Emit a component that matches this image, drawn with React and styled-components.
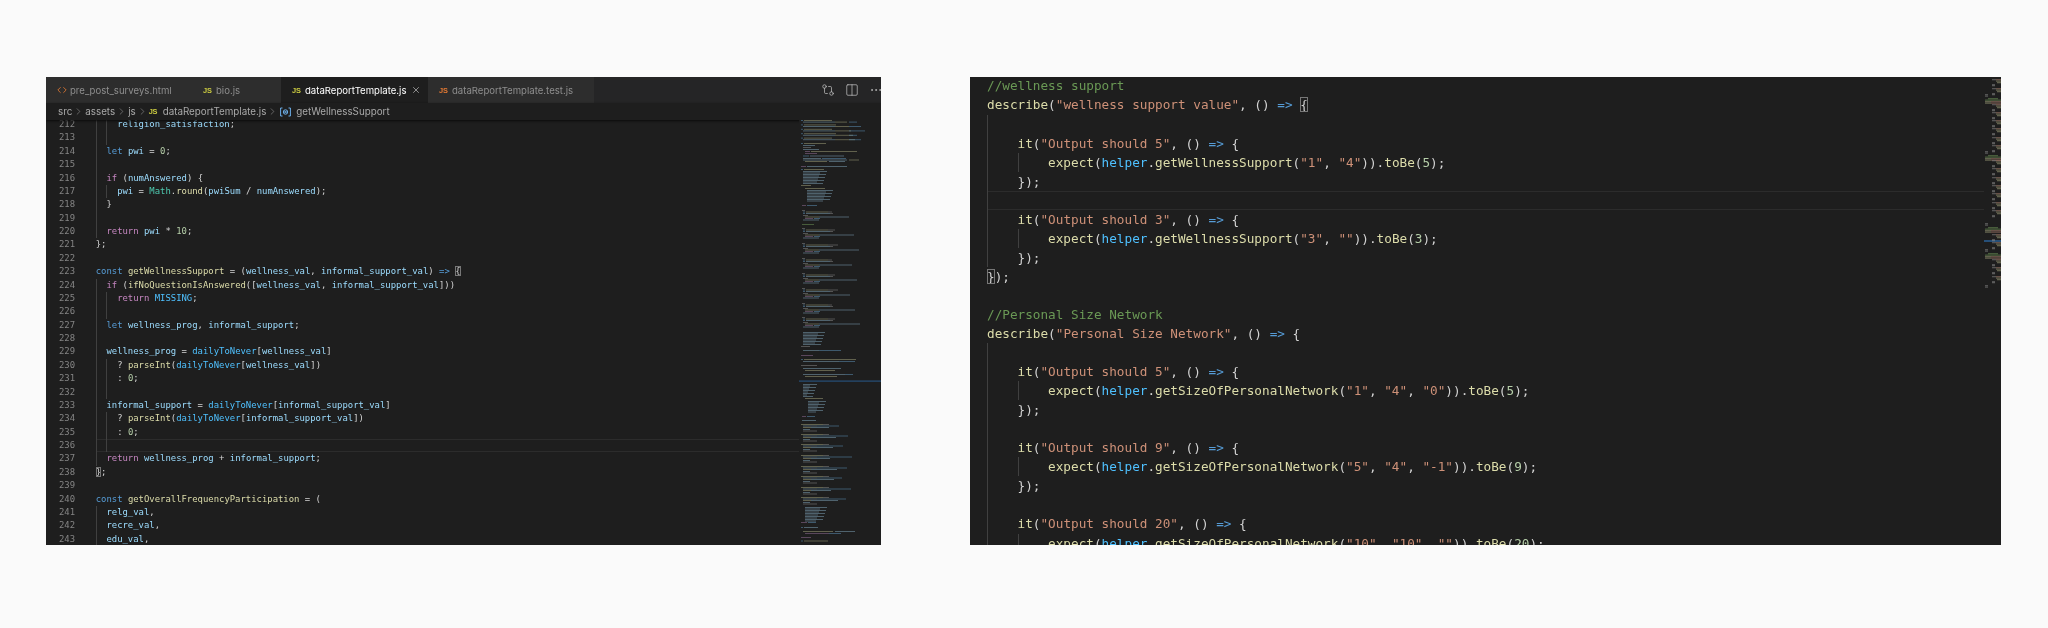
import React from 'react'
import styled, { createGlobalStyle } from 'styled-components'
import { ChevronRight, Code, Columns2, Ellipsis, GitCompare, X } from 'lucide-react'

const GlobalStyle = createGlobalStyle`
  html, body {
    margin: 0;
    background: #fafafa;
  }
`

const colors = {
  keyword: '#569cd6',
  flow: '#c586c0',
  func: '#dcdcaa',
  variable: '#9cdcfe',
  constant: '#4fc1ff',
  type: '#4ec9b0',
  number: '#b5cea8',
  string: '#ce9178',
  comment: '#6a9955',
  plain: '#d4d4d4'
}

const Page = styled.div`
  display: flex;
  align-items: flex-start;
  gap: 89px;
  height: 628px;
  box-sizing: border-box;
  padding: 77px 0 0 46px;
  overflow: hidden;
`

const Shot = styled.div`
  display: flex;
  flex-direction: column;
  width: ${props => props.$width}px;
  height: 468px;
  overflow: hidden;
  background: #1e1e1e;
  filter: blur(0.4px);
`

const TabBar = styled.div`
  display: flex;
  flex: none;
  height: 26px;
  background: #252526;
`

const Tab = styled.div`
  display: flex;
  align-items: center;
  width: ${props => props.$width}px;
  box-sizing: border-box;
  padding-left: 11px;
  background: ${props => (props.$active ? '#1e1e1e' : '#2d2d2d')};
  color: ${props => (props.$active ? '#ffffff' : '#8e8e8e')};
  font: 400 9.6px Inter, "Liberation Sans", sans-serif;
`

const TabLabel = styled.span`
  margin-left: ${props => props.$gap || 5}px;
  white-space: nowrap;
`

const JsBadge = styled.span`
  flex: none;
  width: 9px;
  color: ${props => props.$color || '#cbcb41'};
  font: 700 7.4px "Liberation Sans", sans-serif;
  letter-spacing: -0.2px;
`

const CloseIcon = styled(X)`
  flex: none;
  margin-left: 5px;
`

const TabActions = styled.div`
  display: flex;
  align-items: center;
  gap: 10px;
  margin-left: auto;
  margin-right: -2px;
  color: #c5c5c5;
`

const Breadcrumb = styled.div`
  position: relative;
  z-index: 2;
  display: flex;
  flex: none;
  align-items: center;
  height: 17px;
  padding-left: 12px;
  background: #1e1e1e;
  box-shadow: 0 1px 2px #0b0b0b;
  color: #a9a9a9;
  font: 400 9.8px Inter, "Liberation Sans", sans-serif;
`

const Crumb = styled.span`
  margin-left: ${props => props.$gap || 0}px;
  white-space: nowrap;
`

const CrumbArrow = styled(ChevronRight)`
  flex: none;
  margin: 0 1px;
  color: #9a9a9a;
`

const SymbolIcon = styled.svg`
  flex: none;
  margin-left: 1px;
`

const Editor = styled.div`
  display: flex;
  flex: 1;
  min-height: 0;
`

const CodePane = styled.div`
  flex: 1;
  min-width: 0;
  overflow: hidden;
  padding-left: ${props => props.$padLeft || 0}px;
  font-family: "DejaVu Sans Mono", "Liberation Mono", monospace;
  font-size: ${props => props.$size}px;
  line-height: ${props => props.$lineHeight}px;
`

const CodeScroll = styled.div`
  margin-top: ${props => props.$offset}px;
`

const Row = styled.div`
  display: flex;
  height: ${props => props.$height}px;
`

const LineNumber = styled.span`
  flex: none;
  width: 29px;
  margin-right: 20.7px;
  color: #858585;
  text-align: right;
`

const CodeLine = styled.div`
  display: flex;
  flex: 1;
  min-width: 0;
  box-sizing: border-box;
  white-space: pre;
  color: ${colors.plain};
  box-shadow: ${props => (props.$current ? 'inset 0 1px 0 #2c2c2c, inset 0 -1px 0 #2c2c2c' : 'none')};
`

const Guide = styled.span`
  flex: none;
  box-sizing: border-box;
  width: ${props => props.$tab}ch;
  border-left: 1px solid #404040;
`

const Token = styled.span`
  color: ${props => colors[props.$kind]};
`

const Bracket = styled.span`
  outline: 1px solid #777;
  outline-offset: -1px;
`

const Minimap = styled.svg`
  position: relative;
  z-index: 3;
  display: block;
  flex: none;
  background: #1e1e1e;
`

const flowWords = ['return', 'if']
const keywords = ['const', 'let']
const constants = ['MISSING', 'dailyToNever', 'helper']
const funcNames = ['getWellnessSupport', 'getOverallFrequencyParticipation']

// small highlighter, just enough for the lines in these two screenshots
const highlight = text => {
  const parts = text.match(/\/\/.*|"[^"]*"|=>|§.|[A-Za-z_]\w*|\d+|\s+|./g) || []
  return parts.map((part, i) => {
    const next = parts[i + 1]
    if (part.startsWith('//')) return <Token key={i} $kind="comment">{part}</Token>
    if (part.startsWith('"')) return <Token key={i} $kind="string">{part}</Token>
    if (part.startsWith('§')) return <Bracket key={i}>{part[1]}</Bracket>
    if (part === '=>') return <Token key={i} $kind="keyword">{part}</Token>
    if (/^\d+$/.test(part)) return <Token key={i} $kind="number">{part}</Token>
    if (/^[A-Za-z_]/.test(part)) {
      let kind = 'variable'
      if (flowWords.includes(part)) kind = 'flow'
      else if (keywords.includes(part)) kind = 'keyword'
      else if (constants.includes(part)) kind = 'constant'
      else if (part === 'Math') kind = 'type'
      else if (next === '(' || funcNames.includes(part)) kind = 'func'
      return <Token key={i} $kind={kind}>{part}</Token>
    }
    return <span key={i}>{part}</span>
  })
}

const leftCode = [
  [212, 2, '    religion_satisfaction;'],
  [213, 2, ''],
  [214, 1, '  let pwi = 0;'],
  [215, 1, ''],
  [216, 1, '  if (numAnswered) {'],
  [217, 2, '    pwi = Math.round(pwiSum / numAnswered);'],
  [218, 1, '  }'],
  [219, 1, ''],
  [220, 1, '  return pwi * 10;'],
  [221, 0, '};'],
  [222, 0, ''],
  [223, 0, 'const getWellnessSupport = (wellness_val, informal_support_val) => §{'],
  [224, 1, '  if (ifNoQuestionIsAnswered([wellness_val, informal_support_val]))'],
  [225, 2, '    return MISSING;'],
  [226, 2, ''],
  [227, 1, '  let wellness_prog, informal_support;'],
  [228, 1, ''],
  [229, 1, '  wellness_prog = dailyToNever[wellness_val]'],
  [230, 2, '    ? parseInt(dailyToNever[wellness_val])'],
  [231, 2, '    : 0;'],
  [232, 2, ''],
  [233, 1, '  informal_support = dailyToNever[informal_support_val]'],
  [234, 2, '    ? parseInt(dailyToNever[informal_support_val])'],
  [235, 2, '    : 0;'],
  [236, 2, '', true],
  [237, 1, '  return wellness_prog + informal_support;'],
  [238, 0, '§};'],
  [239, 0, ''],
  [240, 0, 'const getOverallFrequencyParticipation = ('],
  [241, 1, '  relg_val,'],
  [242, 1, '  recre_val,'],
  [243, 1, '  edu_val,']
]

const rightCode = [
  [0, '//wellness support'],
  [0, 'describe("wellness support value", () => §{'],
  [1, ''],
  [1, '    it("Output should 5", () => {'],
  [2, '        expect(helper.getWellnessSupport("1", "4")).toBe(5);'],
  [1, '    });'],
  [1, '', true],
  [1, '    it("Output should 3", () => {'],
  [2, '        expect(helper.getWellnessSupport("3", "")).toBe(3);'],
  [1, '    });'],
  [0, '§});'],
  [0, ''],
  [0, '//Personal Size Network'],
  [0, 'describe("Personal Size Network", () => {'],
  [1, ''],
  [1, '    it("Output should 5", () => {'],
  [2, '        expect(helper.getSizeOfPersonalNetwork("1", "4", "0")).toBe(5);'],
  [1, '    });'],
  [1, ''],
  [1, '    it("Output should 9", () => {'],
  [2, '        expect(helper.getSizeOfPersonalNetwork("5", "4", "-1")).toBe(9);'],
  [1, '    });'],
  [1, ''],
  [1, '    it("Output should 20", () => {'],
  [2, '        expect(helper.getSizeOfPersonalNetwork("10", "10", "")).toBe(20);']
]

const Line = ({ guides, tab, text, current }) => (
  <CodeLine $current={current}>
    {Array.from({ length: guides }, (_, i) => <Guide key={i} $tab={tab} />)}
    <span>{highlight(text.slice(guides * tab))}</span>
  </CodeLine>
)

const BLUE = '#5d93bb'
const YEL = '#a3a37c'
const VAR = '#7fa6bb'
const GRAY = '#8a8a8a'
const PUR = '#96709a'
const GRN = '#6f9a58'
const BRN = '#ad8270'

// left minimap, rows placed by y inside the drawing
const buildLeftMinimap = () => {
  const out = []
  const put = (y, ...segs) => segs.forEach(([x, w, c]) => out.push([y, x, w, c]))
  const dense = (y, n, x, w, c) => {
    for (let i = 0; i < n; i++) put(y + i * 1.5, [x, w - ((i * 7) % 13), c])
  }
  ;[0, 4.4, 8.8, 13.2, 17.6].forEach((y, i) => {
    put(y, [2, 2, BLUE], [5, 28 + (i % 2) * 4, YEL])
    put(y + 1.6, [4, 32, VAR], [36, 12 + i * 2, YEL], [50, 8 + (i % 3) * 4, BLUE])
  })
  put(23, [2, 2, BLUE], [5, 22, YEL])
  put(25, [4, 12, VAR])
  put(27, [4, 8, GRAY])
  put(29, [4, 16, VAR])
  put(31, [6, 5, PUR], [12, 46, YEL])
  put(33, [6, 12, PUR])
  put(35.5, [4, 6, BLUE], [11, 34, VAR])
  put(38, [4, 18, VAR], [23, 24, BLUE])
  put(39.5, [4, 44, VAR], [50, 10, YEL])
  put(41, [6, 22, YEL], [30, 16, VAR])
  put(46, [2, 5, PUR], [8, 40, VAR])
  put(49, [2, 2, BLUE], [5, 20, YEL])
  dense(51, 9, 4, 24, VAR)
  put(65, [2, 10, YEL])
  dense(68, 1, 6, 20, YEL)
  dense(70, 8, 8, 26, VAR)
  put(85, [3, 4, PUR], [8, 10, BLUE])
  ;[90, 108, 123, 138, 153, 168, 183, 197].forEach((y, i) => {
    const long = 30 + ((i * 5) % 12)
    put(y, [3, 3, GRAY])
    put(y + 1.5, [4, 2, BLUE], [7, 22, YEL], [29, 4 + (i % 3) * 3, GRAY])
    put(y + 3, [4, 2, BLUE], [7, 24, VAR], [31, 3, GRAY])
    put(y + 5, [4, 5, GRAY])
    put(y + 6.5, [6, 14, YEL], [20, long, VAR])
    put(y + 8, [6, 8, PUR], [15, 6, BLUE])
    put(y + 9.5, [4, 16, VAR])
  })
  put(104, [3, 12, GRN])
  dense(212, 9, 4, 22, VAR)
  put(226, [2, 9, GRAY])
  put(230, [4, 16, VAR], [20, 22, BLUE])
  put(235, [2, 12, PUR])
  put(239, [2, 2, BLUE], [5, 52, YEL])
  put(241, [4, 36, VAR], [40, 16, BLUE])
  put(245, [2, 16, GRAY])
  put(248, [4, 38, VAR])
  put(250, [6, 30, YEL])
  put(254, [4, 42, VAR], [46, 8, BLUE])
  put(256, [6, 32, YEL])
  dense(264, 9, 4, 14, VAR)
  put(278, [6, 18, YEL])
  dense(281, 8, 9, 18, VAR)
  put(296, [3, 4, PUR], [8, 8, BLUE])
  put(300, [3, 14, VAR])
  ;[304, 314, 324, 335, 346, 356, 367, 377].forEach((y, i) => {
    put(y, [2, 22, YEL], [24, 6, GRAY])
    put(y + 1.5, [4, 14, VAR], [18, 22 + ((i * 9) % 14), BLUE])
    put(y + 3, [4, 8, YEL], [12, 18 + ((i * 7) % 10), VAR])
    put(y + 5, [4, 7, VAR])
    put(y + 6.5, [4, 14, GRAY])
  })
  dense(387, 10, 6, 22, VAR)
  put(402, [2, 6, PUR], [9, 8, BLUE])
  put(407, [2, 2, BLUE], [5, 14, VAR])
  put(411, [4, 30, YEL], [36, 20, VAR])
  put(413, [6, 24, PUR], [30, 12, BLUE])
  put(417, [2, 10, PUR])
  put(420.5, [2, 2, BLUE], [5, 24, YEL])
  return out
}

const buildRightMinimap = () => {
  const out = []
  const put = (y, ...segs) => segs.forEach(([x, w, c]) => out.push([y, x, w, c]))
  const test = y => {
    put(y, [8, 4, GRAY], [12, 6, BRN])
    put(y + 1.5, [12, 6, YEL])
    put(y + 3, [13, 5, YEL])
    put(y + 5, [8, 3, GRAY])
    put(y + 6, [8, 3, GRAY])
  }
  const head = y => {
    put(y, [4, 10, GRN])
    put(y + 1.5, [1, 6, GRN], [7, 11, GRN])
    put(y + 3, [1, 6, YEL], [7, 11, BRN])
    put(y + 4.5, [1, 6, YEL], [7, 11, BRN])
  }
  const close = y => {
    put(y, [1, 3, GRAY])
    put(y + 1.5, [1, 3, GRAY])
  }
  test(2)
  test(11)
  close(17)
  head(21)
  ;[27, 35, 43, 51, 60, 68].forEach(test)
  close(74)
  head(78)
  ;[83, 91, 100, 108, 116, 125, 133].forEach(test)
  close(146)
  head(150)
  test(157)
  test(165)
  close(172)
  head(176)
  ;[182, 190, 199].forEach(test)
  close(208)
  return out
}

const MinimapRows = ({ rows, width, height, barHeight, opacity, children }) => (
  <Minimap width={width} height={height} viewBox={`0 0 ${width} ${height}`}>
    {children}
    {rows.map(([y, x, w, c], i) => (
      <rect key={i} x={x} y={y} width={w} height={barHeight} fill={c} opacity={opacity} />
    ))}
  </Minimap>
)

const VariableIcon = () => (
  <SymbolIcon width="11" height="10" viewBox="0 0 11 10" fill="none" stroke="#75beff" strokeWidth="0.9">
    <path d="M2.5 1H.6v8h1.9M8.5 1h1.9v8H8.5" />
    <circle cx="5.5" cy="5" r="2.2" />
    <path d="M4.4 3.9l2.2 2.2M6.6 3.9L4.4 6.1" />
  </SymbolIcon>
)

const App = () => (
  <Page>
    <GlobalStyle />
    <Shot $width={835}>
      <TabBar>
        <Tab $width={146}>
          <Code size={10} color="#e37933" strokeWidth={2} />
          <TabLabel $gap={3}>pre_post_surveys.html</TabLabel>
        </Tab>
        <Tab $width={89}>
          <JsBadge>JS</JsBadge>
          <TabLabel $gap={4}>bio.js</TabLabel>
        </Tab>
        <Tab $width={147} $active>
          <JsBadge>JS</JsBadge>
          <TabLabel $gap={4}>dataReportTemplate.js</TabLabel>
          <CloseIcon size={10} strokeWidth={1.5} color="#d0d0d0" />
        </Tab>
        <Tab $width={166}>
          <JsBadge $color="#e37933">JS</JsBadge>
          <TabLabel $gap={4}>dataReportTemplate.test.js</TabLabel>
        </Tab>
        <TabActions>
          <GitCompare size={14} strokeWidth={1.2} />
          <Columns2 size={14} strokeWidth={1.2} />
          <Ellipsis size={14} strokeWidth={1.2} />
        </TabActions>
      </TabBar>
      <Breadcrumb>
        <Crumb>src</Crumb>
        <CrumbArrow size={11} strokeWidth={1.2} />
        <Crumb>assets</Crumb>
        <CrumbArrow size={11} strokeWidth={1.2} />
        <Crumb>js</Crumb>
        <CrumbArrow size={11} strokeWidth={1.2} />
        <JsBadge>JS</JsBadge>
        <Crumb $gap={5}>dataReportTemplate.js</Crumb>
        <CrumbArrow size={11} strokeWidth={1.2} />
        <VariableIcon />
        <Crumb $gap={5}>getWellnessSupport</Crumb>
      </Breadcrumb>
      <Editor>
        <CodePane $size={8.92} $lineHeight={13.39}>
          <CodeScroll $offset={-2}>
            {leftCode.map(([num, guides, text, current]) => (
              <Row key={num} $height={13.39}>
                <LineNumber>{num}</LineNumber>
                <Line guides={guides} tab={2} text={text} current={current} />
              </Row>
            ))}
          </CodeScroll>
        </CodePane>
        <MinimapRows rows={buildLeftMinimap()} width={82} height={425} barHeight={1} opacity={0.5}>
          <rect x="0" y="260.5" width="82" height="1.2" fill="#264f78" />
        </MinimapRows>
      </Editor>
    </Shot>
    <Shot $width={1031}>
      <Editor>
        <CodePane $size={12.7} $lineHeight={19.05} $padLeft={17}>
          <CodeScroll $offset={-0.6}>
            {rightCode.map(([guides, text, current], i) => (
              <Row key={i} $height={19.05}>
                <Line guides={guides} tab={4} text={text} current={current} />
              </Row>
            ))}
          </CodeScroll>
        </CodePane>
        <MinimapRows rows={buildRightMinimap()} width={17} height={468} barHeight={1.3} opacity={0.5}>
          <rect x="0" y="163" width="17" height="2" fill="#264f78" />
        </MinimapRows>
      </Editor>
    </Shot>
  </Page>
)

export default App
